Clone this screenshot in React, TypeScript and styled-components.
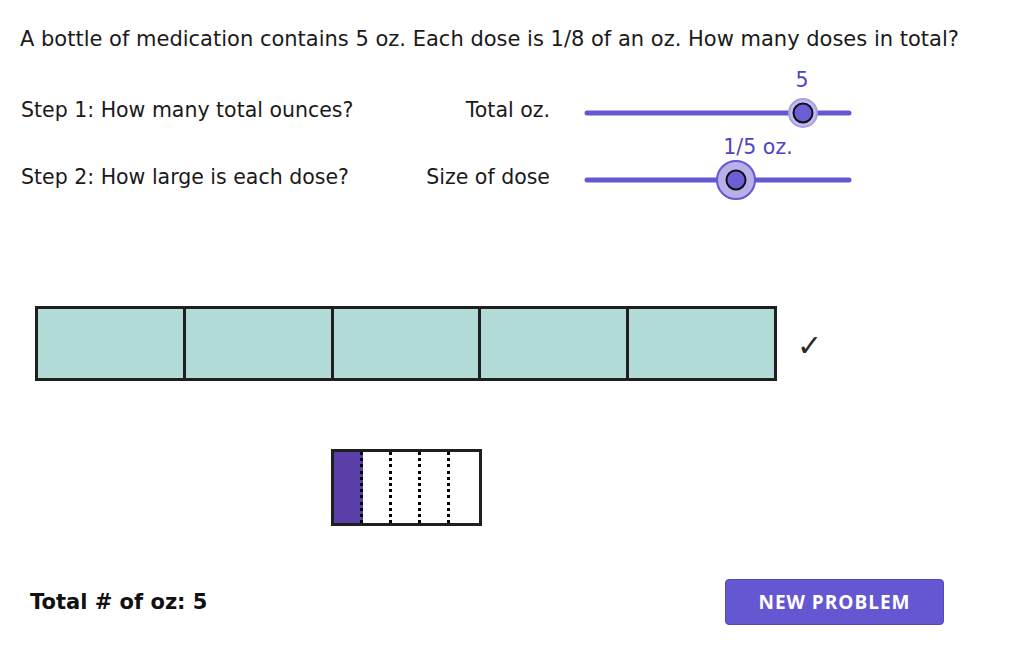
import styled, { createGlobalStyle } from "styled-components";

const GlobalStyle = createGlobalStyle`
  html, body {
    margin: 0;
    padding: 0;
    background: #ffffff;
  }
  body {
    font-family: "DejaVu Sans", "Liberation Sans", sans-serif;
    color: #1a1a1a;
  }
`;

const Page = styled.div`
  width: 1032px;
  height: 645px;
  overflow: hidden;
  background: #ffffff;
`;

const Title = styled.div`
  height: 76px;
  box-sizing: border-box;
  padding: 24px 0 0 20px;
  font-size: 21px;
  line-height: 30px;
  white-space: nowrap;
`;

const StepRow = styled.div`
  display: grid;
  grid-template-columns: 380px 149px 31px 280px;
  align-items: start;
  height: 67px;
  padding-left: 21px;
`;

const StepText = styled.div`
  font-size: 20.5px;
  line-height: 24px;
  padding-top: 22px;
  white-space: nowrap;
`;

const SliderLabel = styled.div`
  font-size: 20.5px;
  line-height: 24px;
  padding-top: 22px;
  text-align: right;
  white-space: nowrap;
`;

const SliderSvg = styled.svg`
  grid-column: 4;
  overflow: visible;
  display: block;
`;

const BarRow = styled.div`
  display: flex;
  align-items: center;
  gap: 20px;
  margin-top: 96px;
  padding-left: 35px;
`;

const Bar = styled.div`
  display: flex;
  width: 742px;
  height: 75px;
  box-sizing: border-box;
  border: 3px solid #1f1f1f;
  background: #b3dbd8;
`;

const Cell = styled.div<{ $first?: boolean }>`
  flex: 1;
  border-left: ${(p) => (p.$first ? "none" : "3px solid #1f1f1f")};
`;

const Check = styled.div`
  font-family: "DejaVu Sans", sans-serif;
  font-size: 30px;
  color: #2a2a2a;
  line-height: 1;
  padding-top: 4px;
`;

const DoseBar = styled.div`
  display: flex;
  width: 151px;
  height: 77px;
  box-sizing: border-box;
  margin: 68px 0 0 331px;
  border: 3px solid #1f1f1f;
  background: #ffffff;
`;

const DosePart = styled.div<{ $filled?: boolean; $last?: boolean }>`
  flex: 1;
  background-color: ${(p) => (p.$filled ? "#5a3fa8" : "transparent")};
  background-image: ${(p) =>
    p.$last
      ? "none"
      : "repeating-linear-gradient(to bottom, #000 0 3px, transparent 3px 6.2px)"};
  background-size: 3px 100%;
  background-position: right top;
  background-repeat: no-repeat;
`;

const Footer = styled.div`
  display: flex;
  align-items: center;
  justify-content: space-between;
  margin-top: 53px;
  padding: 0 88px 0 30px;
`;

const Total = styled.div`
  font-size: 21px;
  font-weight: bold;
  color: #111;
  white-space: nowrap;
`;

const Button = styled.button`
  width: 219px;
  height: 46px;
  border: 1px solid #5548c0;
  border-radius: 4px;
  background: #6557d2;
  color: #ffffff;
  font-family: "Open Sans", "Noto Sans", sans-serif;
  font-weight: 700;
  font-size: 19px;
  letter-spacing: 1px;
  cursor: pointer;
`;

const ACCENT = "#6557d2";

function Slider({
  knobX,
  big,
  label,
  labelX,
}: {
  knobX: number;
  big?: boolean;
  label: string;
  labelX: number;
}) {
  const y = 37;
  return (
    <SliderSvg width={280} height={67}>
      <line x1={6} y1={y} x2={268} y2={y} stroke={ACCENT} strokeWidth={5} strokeLinecap="round" />
      {big ? (
        <circle cx={knobX} cy={y} r={19} fill="#b7b0e9" stroke={ACCENT} strokeWidth={2} />
      ) : (
        <circle cx={knobX} cy={y} r={14} fill="#c3bdee" stroke="#a59ee2" strokeWidth={2} />
      )}
      <circle cx={knobX} cy={y} r={9.5} fill="#6b5fd8" stroke="#111" strokeWidth={2} />
      <text
        x={labelX}
        y={11}
        textAnchor="middle"
        fontSize={20.5}
        fill="#4f44c2"
        fontFamily="DejaVu Sans, sans-serif"
      >
        {label}
      </text>
    </SliderSvg>
  );
}

export default function App() {
  return (
    <Page>
      <GlobalStyle />
      <Title>A bottle of medication contains 5 oz. Each dose is 1/8 of an oz. How many doses in total?</Title>
      <StepRow>
        <StepText>Step 1: How many total ounces?</StepText>
        <SliderLabel>Total oz.</SliderLabel>
        <Slider knobX={222} label="5" labelX={221} />
      </StepRow>
      <StepRow>
        <StepText>Step 2: How large is each dose?</StepText>
        <SliderLabel>Size of dose</SliderLabel>
        <Slider knobX={155} big label="1/5 oz." labelX={177} />
      </StepRow>
      <BarRow>
        <Bar>
          {[0, 1, 2, 3, 4].map((i) => (
            <Cell key={i} $first={i === 0} />
          ))}
        </Bar>
        <Check>✓</Check>
      </BarRow>
      <DoseBar>
        {[0, 1, 2, 3, 4].map((i) => (
          <DosePart key={i} $filled={i === 0} $last={i === 4} />
        ))}
      </DoseBar>
      <Footer>
        <Total>Total # of oz: 5</Total>
        <Button>NEW PROBLEM</Button>
      </Footer>
    </Page>
  );
}
